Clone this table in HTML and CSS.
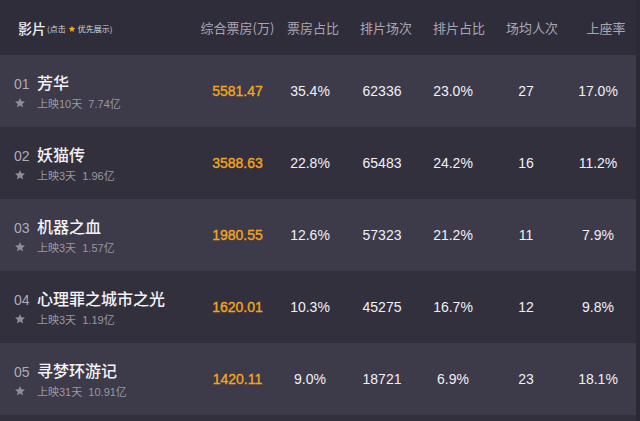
FILE: index.html
```html
<!DOCTYPE html>
<html lang="zh">
<head>
<meta charset="utf-8">
<link rel="stylesheet" href="styles.css">
</head>
<body>
<div class="board">
  <div class="head">
    <div class="h-film"><span class="h-title">影片</span><span class="h-note">(点击 <svg class="h-star" viewBox="0 0 24 24"><path d="M12 2l2.9 6.6 7.1.6-5.4 4.7 1.6 7-6.2-3.7-6.2 3.7 1.6-7L2 9.2l7.1-.6z"/></svg> 优先展示)</span></div>
    <div class="hc">综合票房(万)</div>
    <div class="hc">票房占比</div>
    <div class="hc">排片场次</div>
    <div class="hc">排片占比</div>
    <div class="hc">场均人次</div>
    <div class="hc">上座率</div>
  </div>

  <div class="row odd">
    <div class="film">
      <div class="line1"><span class="rank">01</span><span class="name">芳华</span></div>
      <div class="line2"><svg class="star" viewBox="0 0 24 24"><path d="M12 2l2.9 6.6 7.1.6-5.4 4.7 1.6 7-6.2-3.7-6.2 3.7 1.6-7L2 9.2l7.1-.6z"/></svg><span class="sub">上映10天&nbsp;&nbsp;7.74亿</span></div>
    </div>
    <div class="c box">5581.47</div><div class="c">35.4%</div><div class="c">62336</div><div class="c">23.0%</div><div class="c">27</div><div class="c">17.0%</div>
  </div>

  <div class="row even">
    <div class="film">
      <div class="line1"><span class="rank">02</span><span class="name">妖猫传</span></div>
      <div class="line2"><svg class="star" viewBox="0 0 24 24"><path d="M12 2l2.9 6.6 7.1.6-5.4 4.7 1.6 7-6.2-3.7-6.2 3.7 1.6-7L2 9.2l7.1-.6z"/></svg><span class="sub">上映3天&nbsp;&nbsp;1.96亿</span></div>
    </div>
    <div class="c box">3588.63</div><div class="c">22.8%</div><div class="c">65483</div><div class="c">24.2%</div><div class="c">16</div><div class="c">11.2%</div>
  </div>

  <div class="row odd">
    <div class="film">
      <div class="line1"><span class="rank">03</span><span class="name">机器之血</span></div>
      <div class="line2"><svg class="star" viewBox="0 0 24 24"><path d="M12 2l2.9 6.6 7.1.6-5.4 4.7 1.6 7-6.2-3.7-6.2 3.7 1.6-7L2 9.2l7.1-.6z"/></svg><span class="sub">上映3天&nbsp;&nbsp;1.57亿</span></div>
    </div>
    <div class="c box">1980.55</div><div class="c">12.6%</div><div class="c">57323</div><div class="c">21.2%</div><div class="c">11</div><div class="c">7.9%</div>
  </div>

  <div class="row even">
    <div class="film">
      <div class="line1"><span class="rank">04</span><span class="name">心理罪之城市之光</span></div>
      <div class="line2"><svg class="star" viewBox="0 0 24 24"><path d="M12 2l2.9 6.6 7.1.6-5.4 4.7 1.6 7-6.2-3.7-6.2 3.7 1.6-7L2 9.2l7.1-.6z"/></svg><span class="sub">上映3天&nbsp;&nbsp;1.19亿</span></div>
    </div>
    <div class="c box">1620.01</div><div class="c">10.3%</div><div class="c">45275</div><div class="c">16.7%</div><div class="c">12</div><div class="c">9.8%</div>
  </div>

  <div class="row odd">
    <div class="film">
      <div class="line1"><span class="rank">05</span><span class="name">寻梦环游记</span></div>
      <div class="line2"><svg class="star" viewBox="0 0 24 24"><path d="M12 2l2.9 6.6 7.1.6-5.4 4.7 1.6 7-6.2-3.7-6.2 3.7 1.6-7L2 9.2l7.1-.6z"/></svg><span class="sub">上映31天&nbsp;&nbsp;10.91亿</span></div>
    </div>
    <div class="c box">1420.11</div><div class="c">9.0%</div><div class="c">18721</div><div class="c">6.9%</div><div class="c">23</div><div class="c">18.1%</div>
  </div>

  <div class="row even tail"></div>
</div>
</body>
</html>
```
FILE: styles.css
```css
html, body {
  margin: 0;
  padding: 0;
  background: #2b2934;
  overflow: hidden;
}
body {
  width: 640px;
  height: 421px;
  font-family: "Liberation Sans", "Noto Sans CJK SC", sans-serif;
}
.board {
  width: 636px;
  height: 421px;
  overflow: hidden;
}
.head {
  display: grid;
  grid-template-columns: 200px 75px 76px 70px 76px 70px 78px;
  height: 55px;
  align-items: center;
  background: #302d3b;
  width: 645px;
}
.h-film {
  padding-left: 18px;
  display: flex;
  align-items: center;
  color: #ecebf0;
}
.h-title {
  font-family: "Noto Sans CJK SC", sans-serif;
  font-size: 14px;
  font-weight: 500;
}
.h-note {
  font-family: "Noto Sans CJK SC", sans-serif;
  font-size: 8px;
  margin-left: 1px;
  display: flex;
  align-items: center;
  color: #d8d6de;
  padding-top: 2px;
}
.h-star {
  width: 8px;
  height: 8px;
  fill: #f2a71e;
  margin: 0 2px;
}
.hc {
  text-align: center;
  font-family: "Noto Sans CJK SC", sans-serif;
  font-size: 13px;
  color: #a9a6b2;
}
.row {
  display: grid;
  grid-template-columns: 200px 75px 70px 74px 68px 78px 66px;
  height: 72px;
  align-items: center;
}
.odd { background: #3d3a49; }
.even { background: #33303e; }
.film {
  padding-left: 14px;
  padding-top: 1px;
}
.line1 {
  display: flex;
  align-items: baseline;
  height: 20px;
}
.rank {
  width: 23px;
  font-size: 14px;
  color: #aeabb6;
}
.name {
  font-family: "Noto Sans CJK SC", sans-serif;
  font-size: 16px;
  font-weight: 500;
  color: #f3f2f6;
  line-height: 20px;
}
.line2 {
  display: flex;
  align-items: center;
  height: 16px;
  margin-top: 3px;
}
.star {
  width: 12px;
  height: 12px;
  fill: #8f8c98;
  margin-right: 11px;
}
.sub {
  font-family: "Liberation Sans", "Noto Sans CJK SC", sans-serif;
  font-size: 11px;
  color: #9a97a3;
}
.c {
  text-align: center;
  font-size: 14px;
  color: #f1f0f4;
}
.box {
  color: #f4a51c;
  -webkit-text-stroke: 0.35px #f4a51c;
}
```
